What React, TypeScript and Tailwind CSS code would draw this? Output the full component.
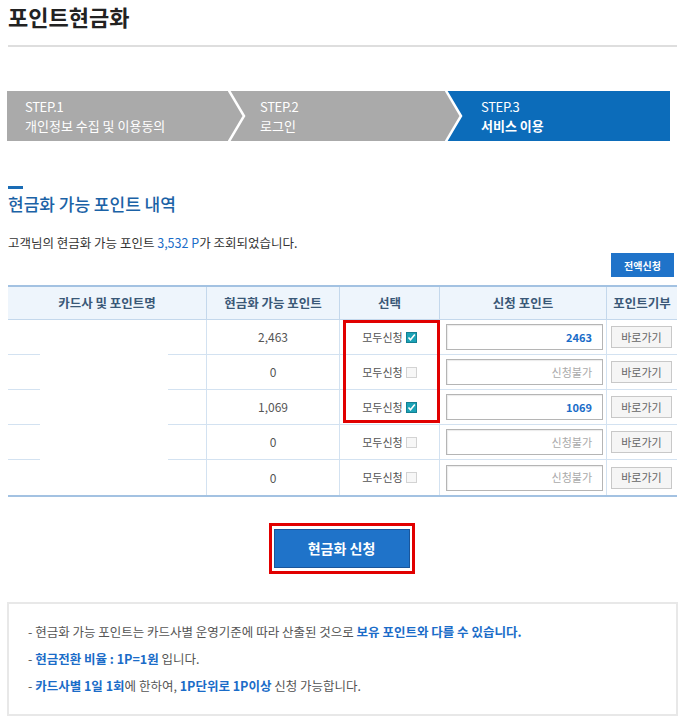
const FONT = { fontFamily: '"Noto Sans CJK KR", "Noto Sans", sans-serif' };

type Row = { point: string; checked: boolean; apply: string };

const ROWS: Row[] = [
  { point: '2,463', checked: true, apply: '2463' },
  { point: '0', checked: false, apply: '' },
  { point: '1,069', checked: true, apply: '1069' },
  { point: '0', checked: false, apply: '' },
  { point: '0', checked: false, apply: '' },
];

function Chevron({ color }: { color: string }) {
  return (
    <svg className="absolute left-0 top-0 z-10" width="20" height="50" viewBox="0 0 20 50">
      <polygon points="0,0 16,25 0,50" fill={color} />
      <polyline points="0,-2 16,25 0,52" fill="none" stroke="#ffffff" strokeWidth="2.5" />
    </svg>
  );
}

function CheckBox({ checked }: { checked: boolean }) {
  if (checked) {
    return (
      <span className="ml-[3px] inline-flex h-[11px] w-[11px] items-center justify-center border border-[#137f92] bg-[#1ba2b6]">
        <svg width="9" height="9" viewBox="0 0 9 9">
          <polyline points="1.5,4.5 3.5,6.8 7.8,1.6" fill="none" stroke="#ffffff" strokeWidth="1.6" />
        </svg>
      </span>
    );
  }
  return <span className="ml-[3px] inline-block h-[11px] w-[11px] border border-[#d3d3d3] bg-[#f7f7f7]" />;
}

export default function App() {
  return (
    <div className="w-[685px] bg-white px-[8px] pt-[2px] pb-[9px]" style={FONT}>
      {/* 타이틀 */}
      <h1 className="text-[22px] font-bold leading-[29px] text-[#222]">포인트현금화</h1>
      <div className="mt-[14px] h-[2px] bg-[#dedede]" />

      {/* 스텝 */}
      <div className="mt-[44px] flex h-[50px] w-[663px] -ml-[1px] text-[13px] leading-[19px] text-white">
        <div className="flex w-[221px] flex-col justify-center bg-[#aaaaaa] pl-[18px]">
          <span className="tracking-tight">STEP.1</span>
          <span>개인정보 수집 및 이용동의</span>
        </div>
        <div className="relative flex w-[217px] flex-col justify-center bg-[#aaaaaa] pl-[32px]">
          <Chevron color="#aaaaaa" />
          <span className="tracking-tight">STEP.2</span>
          <span>로그인</span>
        </div>
        <div className="relative flex flex-1 flex-col justify-center bg-[#0c6cba] pl-[36px]">
          <Chevron color="#aaaaaa" />
          <span className="tracking-tight">STEP.3</span>
          <span className="font-bold">서비스 이용</span>
        </div>
      </div>

      {/* 섹션 타이틀 */}
      <div className="mt-[45px] h-[3px] w-[15px] bg-[#1a6cb5]" />
      <h2 className="mt-[3px] text-[17px] font-medium leading-[23px] text-[#1b62a6]">현금화 가능 포인트 내역</h2>

      <p className="mt-[19px] text-[12.5px] leading-[18px] text-[#333]">
        고객님의 현금화 가능 포인트 <span className="text-[#1a6cc8]">3,532 P</span>가 조회되었습니다.
      </p>

      <div className="mt-[1px] flex justify-end pr-[3px]">
        <button className="h-[24px] w-[63px] bg-[#1f73c9] text-[10px] font-bold text-white">전액신청</button>
      </div>

      {/* 테이블 */}
      <div className="relative mt-[8px] border-t-2 border-b-2 border-[#a3c2e2]">
        <div className="grid h-[33px] grid-cols-[199px_133px_100px_167px_70px] border-b border-[#c4d8ec] bg-[#eef5fc] text-[12.5px] font-bold text-[#3a5877]">
          <div className="flex items-center justify-center border-r border-[#c4d8ec]">카드사 및 포인트명</div>
          <div className="flex items-center justify-center border-r border-[#c4d8ec]">현금화 가능 포인트</div>
          <div className="flex items-center justify-center border-r border-[#c4d8ec]">선택</div>
          <div className="flex items-center justify-center border-r border-[#c4d8ec]">신청 포인트</div>
          <div className="flex items-center justify-center">포인트기부</div>
        </div>
        {ROWS.map((r, i) => (
          <div
            key={i}
            className={`grid h-[35px] grid-cols-[199px_133px_100px_167px_70px] text-[11px] text-[#555] ${
              i < ROWS.length - 1 ? 'border-b border-[#d3e2f1]' : ''
            }`}
          >
            <div className="border-r border-[#d3e2f1]" />
            <div className="flex items-center justify-center border-r border-[#d3e2f1] text-[12px]">{r.point}</div>
            <div className="flex items-center justify-center border-r border-[#d3e2f1]">
              <span>모두신청</span>
              <CheckBox checked={r.checked} />
            </div>
            <div className="flex items-center border-r border-[#d3e2f1] pl-[6px] pr-[3px]">
              <div className="flex h-[26px] w-full items-center justify-end border border-[#b5b5b5] pr-[10px] shadow-[inset_1px_1px_1px_rgba(0,0,0,0.08)]">
                {r.apply ? (
                  <span className="font-bold text-[#1a6cc8]">{r.apply}</span>
                ) : (
                  <span className="text-[#aaa]">신청불가</span>
                )}
              </div>
            </div>
            <div className="flex items-center pl-[4px]">
              <button className="h-[22px] w-[61px] border border-[#c8c8c8] bg-[#f5f5f5] text-[11px] text-[#666]">바로가기</button>
            </div>
          </div>
        ))}

        {/* 가림 처리 */}
        <div className="absolute left-[32px] top-[34px] h-[174px] w-[128px] bg-white" />
        {/* 선택 강조 */}
        <div className="absolute left-[335px] top-[33px] h-[103px] w-[97px] border-[3px] border-[#e10000]" />
      </div>

      {/* 신청 버튼 */}
      <div className="mt-[26px] flex justify-center pr-[2px]">
        <div className="border-[3px] border-[#e10000] px-[2px] py-[3px]">
          <button className="h-[39px] w-[136px] border border-[#1a559a] bg-[#1f73c9] text-[14px] font-bold text-white">
            현금화 신청
          </button>
        </div>
      </div>

      {/* 안내 */}
      <div className="mt-[28px] -mx-[1px] border-2 border-[#e8e8e8] pl-[19px] pt-[14px] pb-[15px] text-[12.5px] leading-[27px] text-[#555]">
        <p>
          - 현금화 가능 포인트는 카드사별 운영기준에 따라 산출된 것으로{' '}
          <span className="font-bold text-[#1a6cc8]">보유 포인트와 다를 수 있습니다.</span>
        </p>
        <p>
          - <span className="font-bold text-[#1a6cc8]">현금전환 비율 : 1P=1원</span> 입니다.
        </p>
        <p>
          - <span className="font-bold text-[#1a6cc8]">카드사별 1일 1회</span>에 한하여,{' '}
          <span className="font-bold text-[#1a6cc8]">1P단위로 1P이상</span> 신청 가능합니다.
        </p>
      </div>
    </div>
  );
}
